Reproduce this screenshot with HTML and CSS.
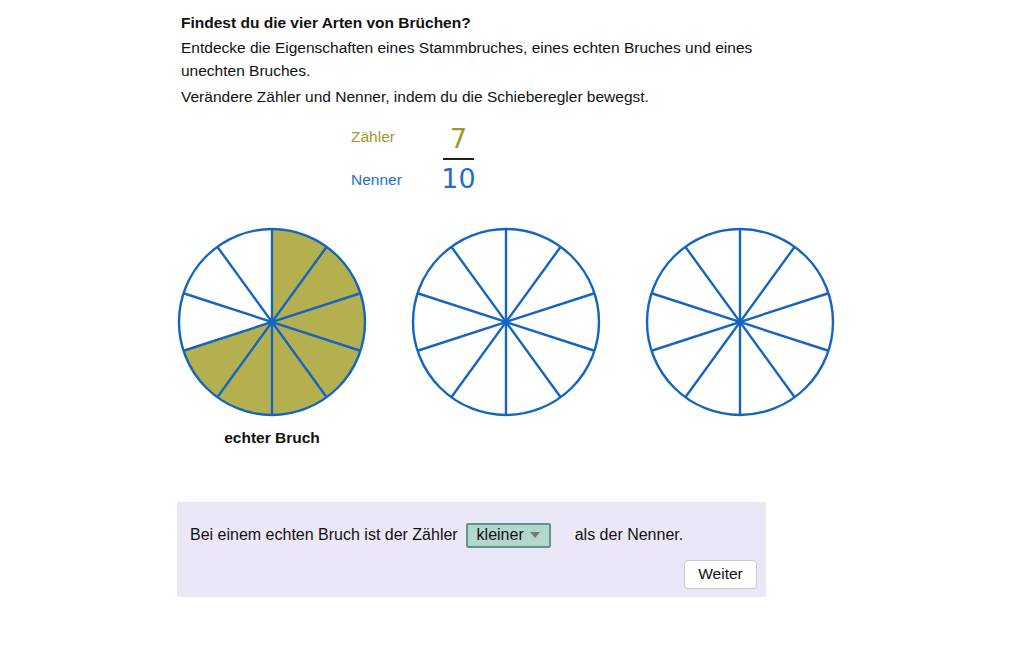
FILE: index.html
```html
<!DOCTYPE html>
<html>
<head>
<meta charset="utf-8">
<link rel="stylesheet" href="styles.css">
</head>
<body>
<div class="page">
  <h1 class="title">Findest du die vier Arten von Brüchen?</h1>
  <p class="intro">Entdecke die Eigenschaften eines Stammbruches, eines echten Bruches und eines unechten Bruches.</p>
  <p class="intro2">Verändere Zähler und Nenner, indem du die Schieberegler bewegst.</p>

  <div class="fraction">
    <div class="labels">
      <div class="lbl-z">Zähler</div>
      <div class="lbl-n">Nenner</div>
    </div>
    <div class="frac">
      <div class="num">7</div>
      <div class="bar"></div>
      <div class="den">10</div>
    </div>
  </div>

  <div class="circles">
    <div class="circle-col">
      <svg width="200" height="200" viewBox="0 0 200 200">
        <path d="M100,100 L100,7 A93,93 0 1,1 11.55,128.74 Z" fill="#b5b04f"/>
        <circle cx="100" cy="100" r="93" fill="none" stroke="#1565c0" stroke-width="2.4"/>
        <g stroke="#1565c0" stroke-width="2.4">
          <line x1="100" y1="7" x2="100" y2="193"/>
          <line x1="154.67" y1="24.76" x2="45.33" y2="175.24"/>
          <line x1="188.45" y1="71.26" x2="11.55" y2="128.74"/>
          <line x1="188.45" y1="128.74" x2="11.55" y2="71.26"/>
          <line x1="154.67" y1="175.24" x2="45.33" y2="24.76"/>
        </g>
      </svg>
      <div class="caption">echter Bruch</div>
    </div>
    <div class="circle-col">
      <svg width="200" height="200" viewBox="0 0 200 200">
        <circle cx="100" cy="100" r="93" fill="none" stroke="#1565c0" stroke-width="2.4"/>
        <g stroke="#1565c0" stroke-width="2.4">
          <line x1="100" y1="7" x2="100" y2="193"/>
          <line x1="154.67" y1="24.76" x2="45.33" y2="175.24"/>
          <line x1="188.45" y1="71.26" x2="11.55" y2="128.74"/>
          <line x1="188.45" y1="128.74" x2="11.55" y2="71.26"/>
          <line x1="154.67" y1="175.24" x2="45.33" y2="24.76"/>
        </g>
      </svg>
    </div>
    <div class="circle-col">
      <svg width="200" height="200" viewBox="0 0 200 200">
        <circle cx="100" cy="100" r="93" fill="none" stroke="#1565c0" stroke-width="2.4"/>
        <g stroke="#1565c0" stroke-width="2.4">
          <line x1="100" y1="7" x2="100" y2="193"/>
          <line x1="154.67" y1="24.76" x2="45.33" y2="175.24"/>
          <line x1="188.45" y1="71.26" x2="11.55" y2="128.74"/>
          <line x1="188.45" y1="128.74" x2="11.55" y2="71.26"/>
          <line x1="154.67" y1="175.24" x2="45.33" y2="24.76"/>
        </g>
      </svg>
    </div>
  </div>

  <div class="task">
    <div class="sentence">
      <span>Bei einem echten Bruch ist der Zähler</span>
      <span class="select">kleiner <span class="caret"></span></span>
      <span class="after">als der Nenner.</span>
    </div>
    <div class="actions">
      <button class="btn">Weiter</button>
    </div>
  </div>
</div>
</body>
</html>
```
FILE: styles.css
```css
html, body {
  margin: 0;
  padding: 0;
  background: #ffffff;
}
body {
  font-family: "Liberation Sans", Arial, sans-serif;
  font-size: 15.5px;
  color: #111;
}
.page {
  padding: 13px 0 0 177px;
  width: 589px;
}
.title {
  font-size: 15.5px;
  font-weight: bold;
  margin: 0 0 0 4px;
  line-height: 20px;
}
.intro {
  margin: 3px 0 0 4px;
  line-height: 23px;
  width: 585px;
}
.intro2 {
  margin: 3px 0 0 4px;
  line-height: 23px;
}
.fraction {
  display: flex;
  margin: 7px 0 0 174px;
  align-items: flex-start;
}
.labels {
  display: flex;
  flex-direction: column;
  width: 92px;
  padding-top: 13px;
}
.lbl-z {
  color: #9c9a2a;
  height: 43px;
}
.lbl-n {
  color: #1e6fc8;
}
.frac {
  display: flex;
  flex-direction: column;
  align-items: center;
  width: 31px;
  padding-top: 8px;
}
.num {
  font-family: "DejaVu Sans", sans-serif;
  font-size: 27px;
  line-height: 32px;
  color: #9c9a2a;
}
.bar {
  width: 31px;
  height: 1.5px;
  background: #222;
  margin: 3px 0 4px;
}
.den {
  font-family: "DejaVu Sans", sans-serif;
  font-size: 27px;
  line-height: 30px;
  color: #1e6fc8;
}
.circles {
  display: flex;
  gap: 34px;
  margin: 28px 0 0 -5px;
}
.circle-col {
  display: flex;
  flex-direction: column;
  align-items: center;
  width: 200px;
}
.circle-col svg {
  display: block;
}
.caption {
  font-weight: bold;
  margin-top: 6px;
  line-height: 20px;
}
.task {
  margin-top: 54px;
  background: #ebe7f7;
  width: 589px;
  height: 95px;
  box-sizing: border-box;
  padding: 21px 9px 0 13px;
}
.sentence {
  display: flex;
  align-items: center;
  font-size: 16px;
}
.select {
  display: inline-flex;
  align-items: center;
  justify-content: center;
  margin-left: 8px;
  width: 85px;
  height: 25px;
  box-sizing: border-box;
  background: #b3d6cf;
  border: 2px solid #5c978c;
  border-radius: 2px;
  gap: 6px;
}
.caret {
  width: 0;
  height: 0;
  border-left: 5px solid transparent;
  border-right: 5px solid transparent;
  border-top: 6px solid #777;
}
.after {
  margin-left: 24px;
}
.actions {
  display: flex;
  justify-content: flex-end;
  margin-top: 12px;
}
.btn {
  font-family: "Liberation Sans", Arial, sans-serif;
  font-size: 15.5px;
  color: #111;
  background: #fff;
  border: 1px solid #c8c8c8;
  border-radius: 4px;
  width: 73px;
  height: 29px;
  padding: 0;
}
```
